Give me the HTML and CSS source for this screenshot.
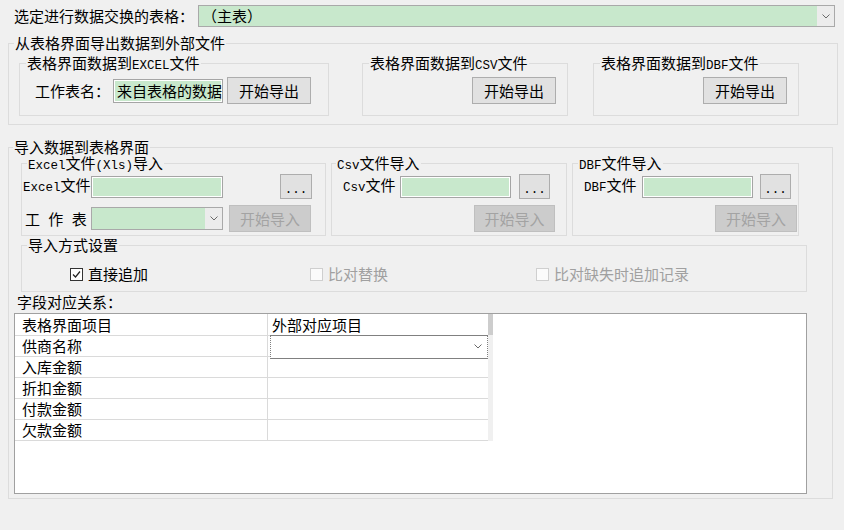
FILE: index.html
```html
<!doctype html>
<html>
  <head>
    <title>数据交换</title>
    <meta charset="utf-8">
    <link rel="stylesheet" href="styles.css">
  </head>

  <body>
    <div class="top">
      <span class="top-label">选定进行数据交换的表格：</span>
      <div class="combo main-combo">
        <span class="value">（主表）</span>
        <span class="drop"><svg width="8" height="5" viewBox="0 0 8 5"><path d="M0.5 0.5 L4 4 L7.5 0.5" fill="none" stroke="#6a6a6a"/></svg></span>
      </div>
    </div>

    <fieldset class="group export">
      <legend>从表格界面导出数据到外部文件</legend>
      <div class="subs">
        <fieldset class="sub exp-excel">
          <legend>表格界面数据到<span class="mono">EXCEL</span>文件</legend>
          <div class="line">
            <label class="sheet-label">工作表名：</label>
            <div class="field sheet-name">来自表格的数据</div>
            <button class="btn export-btn">开始导出</button>
          </div>
        </fieldset>
        <fieldset class="sub exp-csv">
          <legend>表格界面数据到<span class="mono">CSV</span>文件</legend>
          <div class="line right">
            <button class="btn export-btn">开始导出</button>
          </div>
        </fieldset>
        <fieldset class="sub exp-dbf">
          <legend>表格界面数据到<span class="mono">DBF</span>文件</legend>
          <div class="line right">
            <button class="btn export-btn">开始导出</button>
          </div>
        </fieldset>
      </div>
    </fieldset>

    <fieldset class="group import">
      <legend>导入数据到表格界面</legend>
      <div class="subs">
        <fieldset class="sub imp imp-excel">
          <legend><span class="mono">Excel</span>文件<span class="mono">(Xls)</span>导入</legend>
          <div class="line first">
            <label class="file-label"><span class="mono">Excel</span>文件</label>
            <div class="field file-field"></div>
            <button class="btn dots">...</button>
          </div>
          <div class="line second">
            <label class="file-label ws-label">工 作 表</label>
            <div class="combo ws-combo">
              <span class="value"></span>
              <span class="drop"><svg width="8" height="5" viewBox="0 0 8 5"><path d="M0.5 0.5 L4 4 L7.5 0.5" fill="none" stroke="#6a6a6a"/></svg></span>
            </div>
            <button class="btn off import-btn">开始导入</button>
          </div>
        </fieldset>
        <fieldset class="sub imp imp-csv">
          <legend><span class="mono">Csv</span>文件导入</legend>
          <div class="line first">
            <label class="file-label"><span class="mono">Csv</span>文件</label>
            <div class="field file-field"></div>
            <button class="btn dots">...</button>
          </div>
          <div class="line second right">
            <button class="btn off import-btn">开始导入</button>
          </div>
        </fieldset>
        <fieldset class="sub imp imp-dbf">
          <legend><span class="mono">DBF</span>文件导入</legend>
          <div class="line first">
            <label class="file-label"><span class="mono">DBF</span>文件</label>
            <div class="field file-field"></div>
            <button class="btn dots">...</button>
          </div>
          <div class="line second right">
            <button class="btn off import-btn">开始导入</button>
          </div>
        </fieldset>
      </div>

      <fieldset class="sub mode">
        <legend>导入方式设置</legend>
        <div class="checks">
          <span class="check-item">
            <span class="check on"><svg width="11" height="11" viewBox="0 0 11 11"><path d="M2 5.5 L4.5 8 L9 2.5" fill="none" stroke="#222" stroke-width="1.2"/></svg></span>
            直接追加
          </span>
          <span class="check-item disabled">
            <span class="check"></span>
            比对替换
          </span>
          <span class="check-item disabled">
            <span class="check"></span>
            比对缺失时追加记录
          </span>
        </div>
      </fieldset>

      <div class="map-label">字段对应关系：</div>
      <div class="grid">
        <div class="table">
          <div class="cols">
            <div class="row head"><div class="cell c1">表格界面项目</div><div class="cell c2">外部对应项目</div></div>
            <div class="row"><div class="cell c1">供商名称</div><div class="cell c2">
              <div class="editor"><span class="value"></span><svg width="8" height="5" viewBox="0 0 8 5"><path d="M0.5 0.5 L4 4 L7.5 0.5" fill="none" stroke="#6a6a6a"/></svg></div>
            </div></div>
            <div class="row"><div class="cell c1">入库金额</div><div class="cell c2"></div></div>
            <div class="row"><div class="cell c1">折扣金额</div><div class="cell c2"></div></div>
            <div class="row"><div class="cell c1">付款金额</div><div class="cell c2"></div></div>
            <div class="row"><div class="cell c1">欠款金额</div><div class="cell c2"></div></div>
          </div>
          <div class="vscroll"><div class="thumb"></div></div>
        </div>
      </div>
    </fieldset>
  </body>
</html>
```

FILE: styles.css
```css
* {
  box-sizing: border-box;
}
body {
  margin: 0;
  width: 844px;
  height: 530px;
  overflow: hidden;
  background: #f0f0f0;
  color: #000;
  font: 15px/16px "Noto Sans CJK SC", sans-serif;
}
.mono {
  font-family: "Liberation Mono", monospace;
  font-size: 12.5px;
}
label {
  white-space: nowrap;
}

/* top selector */
.top {
  display: flex;
  align-items: center;
  height: 27px;
  padding: 5px 0 0 14px;
}
.top-label {
  width: 184px;
}
.combo {
  display: flex;
  align-items: stretch;
  border: 1px solid #a9a9a9;
  background: #c8e8cc;
}
.combo .value {
  flex: 1;
  display: flex;
  align-items: center;
  padding-left: 3px;
}
.combo .drop {
  width: 17px;
  display: flex;
  align-items: center;
  justify-content: center;
  background: #ececec;
}
.main-combo {
  width: 637px;
  height: 22px;
}

/* group boxes */
fieldset {
  margin: 0;
  padding: 0;
  min-width: 0;
  border: 1px solid #dcdcdc;
}
legend {
  height: 16px;
  line-height: 16px;
  padding: 0 1px;
  margin-left: 5px;
  white-space: nowrap;
}
.subs {
  display: flex;
}
.line {
  display: flex;
  align-items: center;
}
.line.right {
  justify-content: flex-end;
}

.btn {
  padding: 0;
  border: 1px solid #adadad;
  background: #e1e1e1;
  color: #000;
  font: inherit;
}
.btn.off {
  border-color: #bfbfbf;
  background: #cccccc;
  color: #a3a3a3;
}
.dots {
  font-family: "Liberation Mono", monospace;
  font-size: 12.5px;
  line-height: 12px;
  padding-top: 6px;
}
.field {
  border: 1px solid #a5a5a5;
  box-shadow: inset 0 0 0 1px #fff;
  background: #c8e8cc;
  overflow: hidden;
  white-space: nowrap;
}

/* export */
.export {
  width: 830px;
  margin: 8px 0 0 8px;
}
.export > legend {
  margin-left: 5px;
}
.export .subs {
  padding: 4px 0 8px 10px;
}
.export .sub > legend {
  margin-left: 6px;
}
.export .line {
  height: 27px;
  margin-top: 6px;
  margin-bottom: 11px;
}
.exp-excel {
  width: 310px;
}
.exp-excel .line {
  padding-left: 15px;
}
.exp-csv {
  width: 206px;
  margin-left: 33px;
}
.exp-csv .line {
  padding-right: 11px;
}
.exp-dbf {
  width: 206px;
  margin-left: 25px;
}
.exp-dbf .line {
  padding-right: 11px;
}
.sheet-label {
  width: 78px;
}
.sheet-name {
  width: 110px;
  height: 24px;
  padding-left: 3px;
  line-height: 22px;
}
.export-btn {
  width: 84px;
  height: 27px;
  margin-left: 4px;
}

/* import */
.import {
  width: 825px;
  margin: 14px 0 0 8px;
  padding-bottom: 4px;
}
.import > legend {
  margin-left: 4px;
}
.import .subs {
  padding-left: 12px;
}
.imp .line.first {
  height: 25px;
  margin-top: 3px;
}
.imp .line.second {
  height: 27px;
  margin-top: 6px;
  margin-bottom: 3px;
}
.file-field {
  height: 22px;
}
.dots {
  height: 25px;
}
.import-btn {
  width: 82px;
  height: 27px;
}
.imp-excel {
  width: 305px;
}
.imp-excel .line {
  padding-left: 1px;
}
.imp-excel .file-label {
  width: 68px;
}
.imp-excel .ws-label {
  padding-left: 2px;
  word-spacing: 5px;
}
.imp-excel .file-field {
  width: 132px;
}
.imp-excel .dots {
  width: 32px;
  margin-left: 57px;
}
.ws-combo {
  width: 132px;
  height: 23px;
}
.imp-excel .import-btn {
  margin-left: 6px;
}
.imp-csv {
  width: 236px;
  margin-left: 5px;
}
.imp-csv > legend {
  margin-left: 4px;
}
.imp-csv .line {
  padding-left: 11px;
  padding-right: 11px;
}
.imp-csv .file-label {
  width: 57px;
}
.imp-csv .file-field {
  width: 111px;
}
.imp-csv .dots {
  width: 31px;
  margin-left: 8px;
}
.imp-csv .import-btn {
  width: 81px;
}
.imp-dbf {
  width: 227px;
  margin-left: 5px;
}
.imp-dbf .line {
  padding-left: 11px;
  padding-right: 1px;
}
.imp-dbf .file-label {
  width: 58px;
}
.imp-dbf .file-field {
  width: 111px;
}
.imp-dbf .dots {
  width: 31px;
  margin-left: 7px;
}

/* import mode */
.mode {
  width: 786px;
  margin: 1px 0 0 12px;
}
.checks {
  display: grid;
  grid-template-columns: 240px 226px auto;
  height: 16px;
  margin: 13px 0 9px;
  padding-left: 48px;
}
.check-item {
  display: flex;
  align-items: center;
  gap: 5px;
}
.check-item.disabled {
  color: #a0a0a0;
}
.check {
  width: 13px;
  height: 13px;
  display: flex;
  align-items: center;
  justify-content: center;
  border: 1px solid #cfcfcf;
  background: #fbfbfb;
}
.check.on {
  border-color: #333;
  background: #fff;
}

/* field mapping grid */
.map-label {
  height: 18px;
  line-height: 18px;
  margin: 1px 0 0 8px;
}
.grid {
  width: 793px;
  height: 181px;
  margin: 2px 0 0 5px;
  border: 1px solid #a0a0a0;
  background: #fff;
}
.table {
  display: flex;
}
.cols {
  width: 473px;
}
.row {
  display: flex;
  height: 21px;
  border-bottom: 1px solid #dadada;
}
.row.head {
  height: 22px;
}
.cell {
  display: flex;
  align-items: center;
}
.c1 {
  width: 253px;
  padding-left: 7px;
  border-right: 1px solid #dadada;
}
.c2 {
  width: 220px;
  padding-left: 4px;
}
.editor {
  display: flex;
  align-items: center;
  width: 218px;
  height: 24px;
  margin: -1px 0 -2px -2px;
  padding-right: 5px;
  border: 1px solid #808080;
  border-left-style: dotted;
  border-right-style: dotted;
  background: #fff;
}
.editor .value {
  flex: 1;
}
.vscroll {
  width: 5px;
  height: 127px;
  background: #f0f0f0;
}
.thumb {
  height: 21px;
  background: #cdcdcd;
}
```
